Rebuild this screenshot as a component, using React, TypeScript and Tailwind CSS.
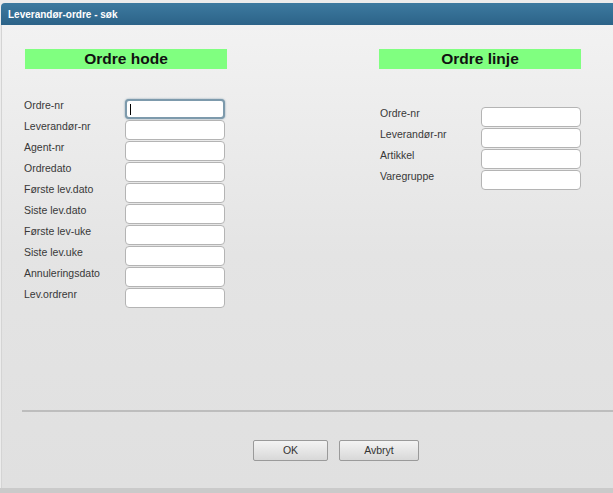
import React from "react";

const hodeFields = [
  "Ordre-nr",
  "Leverandør-nr",
  "Agent-nr",
  "Ordredato",
  "Første lev.dato",
  "Siste lev.dato",
  "Første lev-uke",
  "Siste lev.uke",
  "Annuleringsdato",
  "Lev.ordrenr",
];

const linjeFields = ["Ordre-nr", "Leverandør-nr", "Artikkel", "Varegruppe"];

function Field({ label, focused }: { label: string; focused?: boolean }) {
  return (
    <div className="flex h-[21px] items-start">
      <span className="w-[101px] text-[10.5px] leading-[12px] text-[#383838]">{label}</span>
      <div
        className={`h-[20px] w-[100px] rounded-[4px] bg-white ${
          focused
            ? "border-2 border-[#7d9aac] shadow-[0_0_2px_#7d9aac]"
            : "border border-[#b4b4b4]"
        } flex items-center pl-[3px]`}
      >
        {focused && <span className="h-[11px] w-px bg-black" />}
      </div>
    </div>
  );
}

function Header({ children }: { children: React.ReactNode }) {
  return (
    <div className="flex h-[20px] w-[202px] items-center justify-center bg-[#80ff80] text-[15.5px] font-bold text-[#111]">
      {children}
    </div>
  );
}

export default function App() {
  return (
    <div
      className="flex h-[493px] w-[613px] flex-col overflow-hidden bg-[#ececec]"
      style={{ fontFamily: '"Liberation Sans", Arial, sans-serif' }}
    >
      <div className="mt-[3px] ml-[1px] flex h-[22px] shrink-0 items-center rounded-tl-[4px] bg-gradient-to-b from-[#3d7aa0] to-[#2c6388] pl-[7px] text-[10px] font-bold text-white">
        Leverandør-ordre - søk
      </div>

      <div className="ml-[1px] flex h-[463px] flex-col border-l border-[#d4d4d4] bg-gradient-to-b from-[#f2f2f2] via-[#e4e4e4] to-[#e0e0e0]">
        <div className="flex pt-[24px]">
          <div className="ml-[22px] flex flex-col">
            <div className="ml-px">
              <Header>Ordre hode</Header>
            </div>
            <div className="mt-[30px] flex flex-col">
              {hodeFields.map((f, i) => (
                <Field key={f} label={f} focused={i === 0} />
              ))}
            </div>
          </div>
          <div className="ml-[153px] flex flex-col">
            <div className="-ml-[1px]">
              <Header>Ordre linje</Header>
            </div>
            <div className="mt-[38px] flex flex-col">
              {linjeFields.map((f) => (
                <Field key={f} label={f} />
              ))}
            </div>
          </div>
        </div>

        <div className="mt-auto ml-[20px] h-[2px] bg-[#bdbdbd]" />

        <div className="flex gap-[11px] pt-[28px] pb-[27px] pl-[251px]">
          <button className="h-[21px] w-[75px] rounded-[2px] border border-[#9a9a9a] bg-gradient-to-b from-[#f4f4f4] to-[#d8d8d8] text-[10.5px] text-[#333]">
            OK
          </button>
          <button className="h-[21px] w-[80px] rounded-[2px] border border-[#9a9a9a] bg-gradient-to-b from-[#f4f4f4] to-[#d8d8d8] text-[10.5px] text-[#333]">
            Avbryt
          </button>
        </div>
      </div>
      <div className="h-[5px] bg-[#cacaca]" />
    </div>
  );
}
